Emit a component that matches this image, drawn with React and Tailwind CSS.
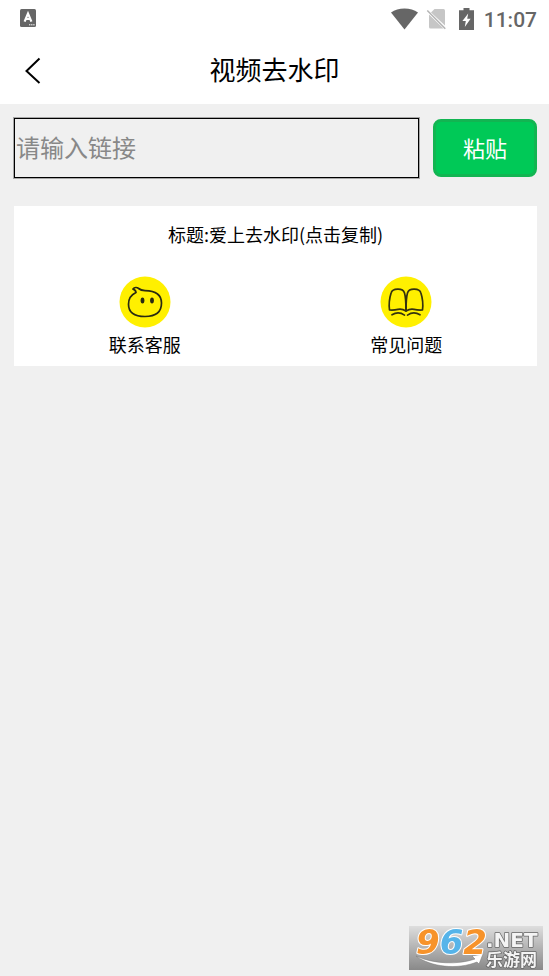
import { useState } from "react";

function StatusBar() {
  return (
    <div className="flex h-9 items-center justify-between pl-5 pr-3 text-[#666]">
      <svg width="16" height="18" viewBox="0 0 16 18" aria-hidden="true">
        <rect width="16" height="18" rx="1.5" fill="#666" />
        <path d="M4.600 12.600 8 4.600l3.400 8M5.800 10h4.400" fill="none" stroke="#fff" strokeWidth="2.200" />
        <path d="M9 15.800h6" stroke="#fff" strokeWidth="1" strokeDasharray="1.400 .7" />
      </svg>
      <div className="flex items-start pt-1">
        <svg width="27" height="22" viewBox="0 0 26 22" preserveAspectRatio="none" aria-hidden="true">
          <path d="M13 21.500 0 4.600C3.600 2 8 .5 13 .5s9.400 1.500 13 4.100z" fill="currentColor" />
        </svg>
        <svg className="ml-2" width="21" height="22" viewBox="0 0 20 22" aria-hidden="true">
          <path d="M8 1h9q1.500 0 1.500 1.500v15L4.500 4.500z" fill="#c6c6c6" />
          <path d="M2.500 6.500 17 20.500H4q-1.500 0-1.500-1.500z" fill="#c6c6c6" />
          <path d="M.8 2.400 18.800 20.800" stroke="#b4b4b4" strokeWidth="1.500" />
        </svg>
        <svg className="ml-3" width="15" height="22" viewBox="0 0 15 22" aria-hidden="true">
          <path d="M4.500 0h6v2.200H15V22H0V2.200h4.500z" fill="currentColor" />
          <path d="M9.200 5.400 3.400 13h3.400l-1 6 5.800-8.200H8.200z" fill="#fff" />
        </svg>
        <span className="ml-2.5 font-[Roboto,sans-serif] text-[21px] font-medium leading-6">11:07</span>
      </div>
    </div>
  );
}

function Header() {
  return (
    <header className="bg-white">
      <StatusBar />
      <div className="grid h-17 grid-cols-[64px_1fr_64px] items-center">
        <button type="button" aria-label="返回" className="flex h-full items-center pl-6">
          <svg width="18" height="28" viewBox="0 0 18 28" fill="none" aria-hidden="true">
            <path d="M15.500 2.500 2.500 15l13 12" stroke="#000" strokeWidth="2" />
          </svg>
        </button>
        <h1 className="pb-0.5 text-center text-[26px] leading-9">视频去水印</h1>
      </div>
    </header>
  );
}

function ServiceIcon() {
  return (
    <svg width="52" height="52" viewBox="0 0 52 52" fill="none" aria-hidden="true">
      <circle cx="26" cy="26" r="25.500" fill="#fff000" />
      <path
        d="M17 16.500c-.2-1.800-1.200-3-3-3.400 1.400-2 4-2 5.600-.6 1.500 1.300 3.400 2 6.400 2.100 11.500.2 16.500 4.200 16.500 12.400 0 8.800-5 13.500-16.500 13.500S9.500 36 9.500 28.200c0-5.600 2.400-9.300 7.500-11.700z"
        stroke="#292a12"
        strokeWidth="1.700"
        strokeLinejoin="round"
      />
      <ellipse cx="23.500" cy="24.500" rx="1.900" ry="3" fill="#292a12" />
      <ellipse cx="33" cy="24.500" rx="1.900" ry="3" fill="#292a12" />
    </svg>
  );
}

function BookIcon() {
  return (
    <svg width="52" height="52" viewBox="0 0 52 52" fill="none" aria-hidden="true">
      <circle cx="26" cy="26" r="25.500" fill="#fff000" />
      <g stroke="#33320f" strokeWidth="1.700" strokeLinecap="round" strokeLinejoin="round">
        <path d="M26 35c-3-1.800-5-2.200-8-1.600-3 .7-5.500.9-8.500.6-.8-6 0-12 1.600-17 1.400-4.800 11.800-5.300 13.400 0 1.200 4 1.500 8 1.500 18z" />
        <path d="M26 35c3-1.800 5-2.200 8-1.600 3 .7 5.500.9 8.500.6.8-6 0-12-1.600-17-1.400-4.800-11.800-5.300-13.400 0-1.200 4-1.500 8-1.500 18z" />
        <path d="M12 38.800c4-2.400 8.500-2.400 12.500.3M27.500 39.100c4-2.700 8.500-2.700 12.500-.3" />
      </g>
    </svg>
  );
}

const links = [
  { label: "联系客服", Icon: ServiceIcon },
  { label: "常见问题", Icon: BookIcon },
];

function SiteBadge() {
  return (
    <div className="fixed bottom-1.5 right-1.5 bg-linear-to-b from-[#dedede] to-[#898989]">
      <svg width="134" height="44" viewBox="0 0 134 44" overflow="visible" aria-label="962.NET 乐游网" role="img">
        <path d="M7 30c17 8 42 9 59 3l-3-3 11-2-4 10-2-2C48 44 22 41 7 30z" fill="#fff" stroke="#777" strokeWidth=".5" />
        <g
          stroke="#fff"
          strokeWidth="2"
          strokeLinejoin="round"
          paintOrder="stroke"
          fontFamily="DejaVu Sans, sans-serif"
          fontWeight="700"
        >
          <text x="7" y="28" fontSize="34" fontStyle="italic" fill="#f7932a">
            9<tspan fill="#56b4e9">6</tspan>2
          </text>
          <g stroke="#666" strokeWidth="1.500" fill="#f4f4f4">
            <text x="77" y="21" fontSize="20">.NET</text>
            <text x="77" y="40" fontSize="17" fontFamily="Noto Sans CJK SC, sans-serif">乐游网</text>
          </g>
        </g>
      </svg>
    </div>
  );
}

export default function App() {
  const [link, setLink] = useState("");

  const paste = async () => {
    setLink(await navigator.clipboard.readText());
  };

  return (
    <div className="min-h-screen bg-[#f0f0f0] font-['Noto_Sans_CJK_SC',sans-serif] text-black">
      <Header />
      <main className="flex flex-col gap-7 py-3.5 pl-3.5 pr-3">
        <div className="flex items-center gap-3.5">
          <input
            aria-label="请输入链接"
            className="h-15 min-w-0 flex-1 border border-black bg-transparent px-px pb-1 text-2xl outline-none ring-1 ring-black/30 placeholder:text-[#888]"
            placeholder="请输入链接"
            value={link}
            onChange={(e) => setLink(e.target.value)}
          />
          <button
            type="button"
            className="h-[58px] w-26 rounded-lg border-3 border-[#12b552] bg-[#00c957] pb-0.5 text-[22px] leading-8 text-white"
            onClick={paste}
          >
            粘贴
          </button>
        </div>

        <section className="bg-white pb-2 pt-4">
          <p className="text-center text-lg leading-6">标题:爱上去水印(点击复制)</p>
          <div className="mt-7.5 grid grid-cols-2">
            {links.map(({ label, Icon }) => (
              <button key={label} type="button" className="flex flex-col items-center gap-0.5 text-lg leading-7">
                <Icon />
                {label}
              </button>
            ))}
          </div>
        </section>
      </main>
      <SiteBadge />
    </div>
  );
}
